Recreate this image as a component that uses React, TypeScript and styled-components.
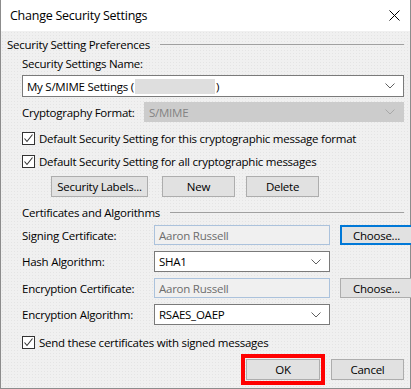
import React from "react";
import styled, { createGlobalStyle } from "styled-components";

const GlobalStyle = createGlobalStyle`
  html, body {
    margin: 0;
    padding: 0;
    background: #ffffff;
  }
  body {
    font-family: "Open Sans", "Noto Sans", sans-serif;
    font-size: 11.5px;
    letter-spacing: -0.25px;
    color: #000000;
  }
  * {
    box-sizing: border-box;
  }
`;

const Chevron = ({ color = "#606060" }: { color?: string }) => (
  <svg width="10" height="6" viewBox="0 0 10 6">
    <polyline
      points="0.5,0.5 5,5 9.5,0.5"
      fill="none"
      stroke={color}
      strokeWidth="1"
    />
  </svg>
);

const CloseIcon = () => (
  <svg width="11" height="11" viewBox="0 0 11 11">
    <path d="M0.5 0.5 L10.5 10.5 M10.5 0.5 L0.5 10.5" stroke="#000" strokeWidth="1" />
  </svg>
);

const CheckMark = () => (
  <svg width="11" height="11" viewBox="0 0 11 11">
    <polyline
      points="1.5,5.5 4,8.5 9.5,1.5"
      fill="none"
      stroke="#333"
      strokeWidth="1.1"
    />
  </svg>
);

const SectionHeader = ({ title, top }: { title: string; top: number }) => (
  <GroupHeader $top={top}>
    <span>{title}</span>
    <GroupLine />
  </GroupHeader>
);

const CheckRow = ({ label, top }: { label: string; top: number }) => (
  <CheckLine $top={top}>
    <CheckBox>
      <CheckMark />
    </CheckBox>
    <span>{label}</span>
  </CheckLine>
);

const App = () => {
  return (
    <>
      <GlobalStyle />
      <Window>
        <TitleBar>
          <Title>Change Security Settings</Title>
          <CloseButton>
            <CloseIcon />
          </CloseButton>
        </TitleBar>
        <Body>
          <SectionHeader title="Security Setting Preferences" top={0} />
          <Content>
            <PlainLabel $top={4}>Security Settings Name:</PlainLabel>
            <Combo $h={22} $top={3}>
              <ComboText>
                My S/MIME Settings (<Redacted />)
              </ComboText>
              <Chevron />
            </Combo>
            <FormatRow>
              <Label>Cryptography Format:</Label>
              <Combo $h={20} $disabled>
                <ComboText>S/MIME</ComboText>
                <Chevron color="#a8a8a8" />
              </Combo>
            </FormatRow>
            <CheckRow
              label="Default Security Setting for this cryptographic message format"
              top={8}
            />
            <CheckRow
              label="Default Security Setting for all cryptographic messages"
              top={7}
            />
            <ButtonRow>
              <Button $w={97}>Security Labels...</Button>
              <Button $w={73} $gap={14}>
                New
              </Button>
              <Button $w={73} $gap={11}>
                Delete
              </Button>
            </ButtonRow>
            <SectionHeader title="Certificates and Algorithms" top={7} />
            <CertGrid>
              <Label>Signing Certificate:</Label>
              <ReadOnlyField>Aaron Russell</ReadOnlyField>
              <Button $focused>Choose...</Button>

              <Label>Hash Algorithm:</Label>
              <Combo>
                <ComboText>SHA1</ComboText>
                <Chevron />
              </Combo>
              <span />

              <Label>Encryption Certificate:</Label>
              <ReadOnlyField>Aaron Russell</ReadOnlyField>
              <Button>Choose...</Button>

              <Label>Encryption Algorithm:</Label>
              <Combo>
                <ComboText>RSAES_OAEP</ComboText>
                <Chevron />
              </Combo>
              <span />
            </CertGrid>
            <CheckRow label="Send these certificates with signed messages" top={9} />
          </Content>
          <Footer>
            <Highlight>
              <Button $w={74}>OK</Button>
            </Highlight>
            <Button $w={73}>Cancel</Button>
          </Footer>
        </Body>
      </Window>
    </>
  );
};

export default App;

const Window = styled.div`
  width: 411px;
  height: 389px;
  display: flex;
  flex-direction: column;
  border: 1px solid #8c8c8c;
  border-top: none;
  background: #ffffff;
`;

const TitleBar = styled.div`
  height: 31px;
  flex: 0 0 31px;
  display: flex;
  align-items: center;
  justify-content: space-between;
  padding: 0 9px 0 9px;
  background: #ffffff;
`;

const Title = styled.div`
  font-size: 12.5px;
  color: #000000;
  margin-top: -1px;
`;

const CloseButton = styled.div`
  display: flex;
  align-items: center;
  margin-right: 1px;
`;

const Body = styled.div`
  flex: 1;
  display: flex;
  flex-direction: column;
  padding: 5px 6px 0 6px;
  background-color: #f0f0f0;
  background-image: radial-gradient(#e4e4e4 0.6px, transparent 0.8px);
  background-size: 3px 3px;
`;

const GroupHeader = styled.div<{ $top: number }>`
  display: flex;
  align-items: center;
  gap: 10px;
  height: 16px;
  margin-top: ${(p) => p.$top}px;
  white-space: nowrap;
`;

const GroupLine = styled.div`
  flex: 1;
  height: 1px;
  background: #a0a0a0;
`;

const Content = styled.div`
  display: flex;
  flex-direction: column;
  padding-left: 15px;
`;

const PlainLabel = styled.div<{ $top: number }>`
  height: 16px;
  line-height: 16px;
  margin-top: ${(p) => p.$top}px;
`;

const Label = styled.div`
  display: flex;
  align-items: center;
  white-space: nowrap;
`;

const Combo = styled.div<{ $h?: number; $top?: number; $disabled?: boolean }>`
  height: ${(p) => (p.$h ? `${p.$h}px` : "auto")};
  margin-top: ${(p) => p.$top ?? 0}px;
  display: flex;
  align-items: center;
  justify-content: space-between;
  padding: 0 8px 0 4px;
  border: 1px solid ${(p) => (p.$disabled ? "#cccccc" : "#7a7a7a")};
  background: ${(p) => (p.$disabled ? "#cccccc" : "#ffffff")};
  color: ${(p) => (p.$disabled ? "#838383" : "#000000")};
`;

const ComboText = styled.span`
  display: flex;
  align-items: center;
  white-space: nowrap;
`;

const Redacted = styled.span`
  display: inline-block;
  width: 80px;
  height: 15px;
  margin: 0 1px;
  background: #dedede;
  filter: blur(0.6px);
`;

const FormatRow = styled.div`
  display: grid;
  grid-template-columns: 122px 1fr;
  height: 20px;
  margin-top: 5px;
`;

const CheckLine = styled.div<{ $top: number }>`
  display: flex;
  align-items: center;
  gap: 4px;
  height: 16px;
  margin-top: ${(p) => p.$top}px;
  white-space: nowrap;
`;

const CheckBox = styled.span`
  width: 13px;
  height: 13px;
  flex: 0 0 13px;
  display: flex;
  align-items: center;
  justify-content: center;
  border: 1px solid #333333;
  background: #ffffff;
`;

const ButtonRow = styled.div`
  display: flex;
  padding-left: 29px;
  margin-top: 7px;
`;

const Button = styled.div<{ $w?: number; $gap?: number; $focused?: boolean }>`
  width: ${(p) => (p.$w ? `${p.$w}px` : "auto")};
  height: 21px;
  margin-left: ${(p) => p.$gap ?? 0}px;
  display: flex;
  align-items: center;
  justify-content: center;
  background: #e1e1e1;
  border: ${(p) => (p.$focused ? "2px solid #0078d7" : "1px solid #adadad")};
  white-space: nowrap;
`;

const CertGrid = styled.div`
  display: grid;
  grid-template-columns: 122px 176px 73px;
  grid-template-rows: 20px 21px 20px 21px;
  column-gap: 10px;
  row-gap: 6px;
  margin-top: 5px;

  > ${Button} {
    height: 20px;
  }
`;

const ReadOnlyField = styled.div`
  display: flex;
  align-items: center;
  padding: 0 4px;
  border: 1px solid #abc2dc;
  background: #f0f0f0;
  color: #6d6d6d;
`;

const Footer = styled.div`
  display: flex;
  justify-content: flex-end;
  align-items: center;
  gap: 11px;
  margin-top: 9px;
`;

const Highlight = styled.div`
  outline: 4px solid #ff0000;
  outline-offset: 1px;
`;
